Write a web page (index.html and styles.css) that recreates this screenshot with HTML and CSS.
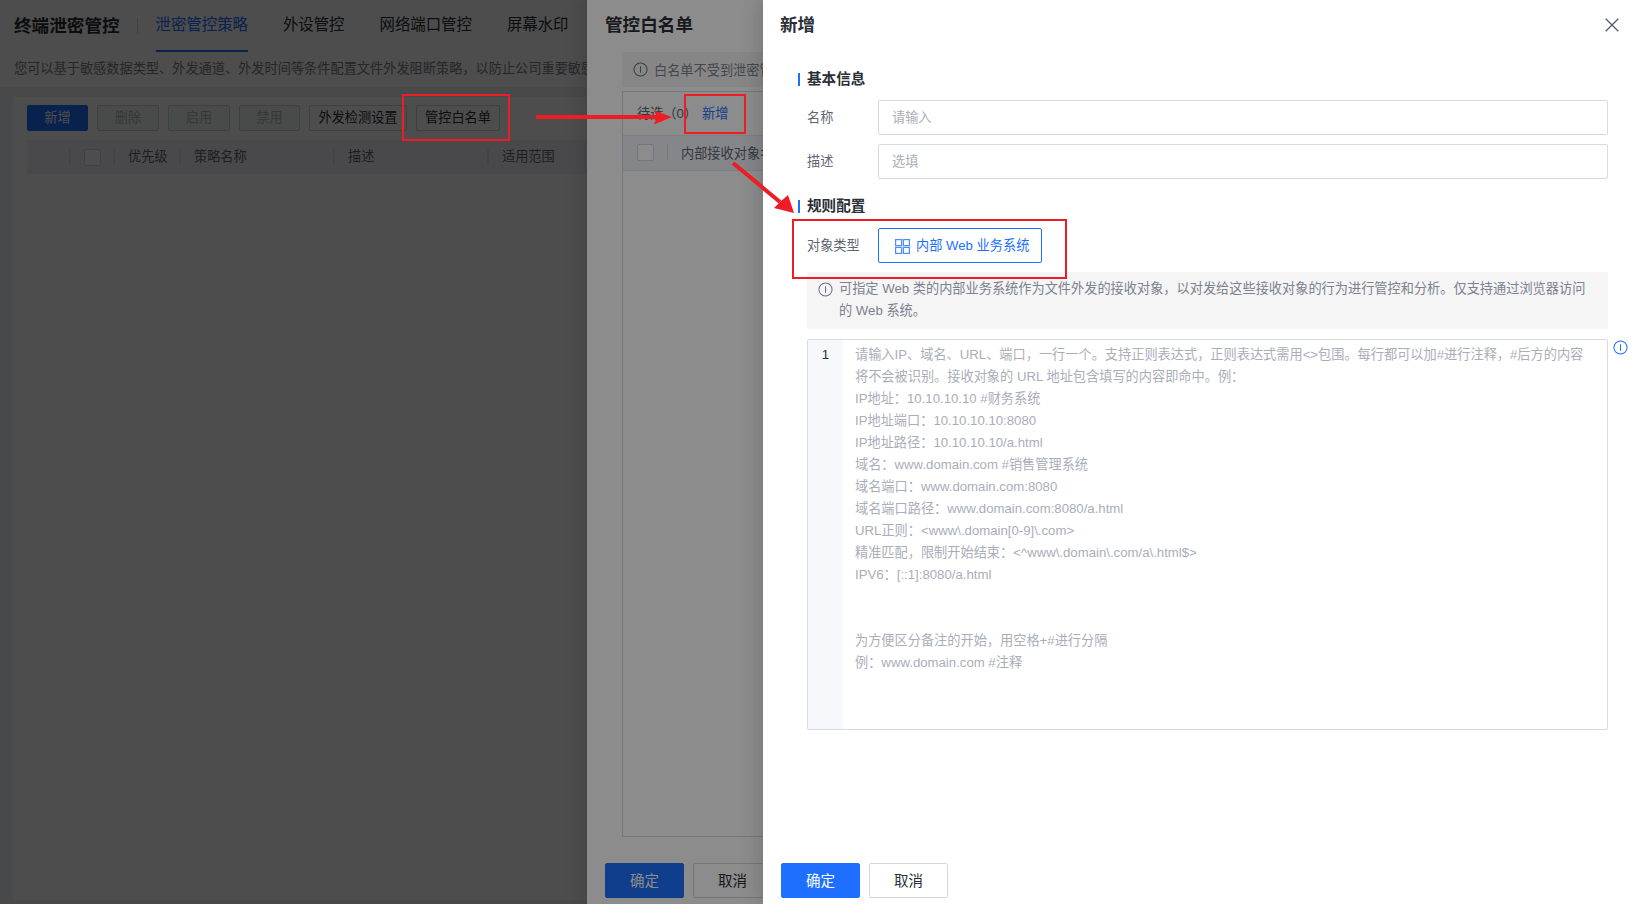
FILE: index.html
```html
<!DOCTYPE html>
<html lang="zh">

<head>
    <meta charset="utf-8">
    <title>终端泄密管控</title>
    <link rel="stylesheet" href="styles.css">
</head>

<body>
    <!-- 底层页面 -->
    <div class="page">
        <div class="page-head">
            <div class="page-title">终端泄密管控</div>
            <div class="head-sep"></div>
            <div class="tabs">
                <span class="tab active">泄密管控策略</span>
                <span class="tab">外设管控</span>
                <span class="tab">网络端口管控</span>
                <span class="tab">屏幕水印</span>
            </div>
        </div>
        <div class="page-desc">您可以基于敏感数据类型、外发通道、外发时间等条件配置文件外发阻断策略，以防止公司重要敏感</div>
        <div class="page-body">
            <div class="card">
                <div class="toolbar">
                    <span class="btn primary w61">新增</span>
                    <span class="btn disabled w62">删除</span>
                    <span class="btn disabled w62">启用</span>
                    <span class="btn disabled w61">禁用</span>
                    <span class="btn w98">外发检测设置</span>
                    <span class="btn w84">管控白名单</span>
                </div>
                <div class="table-head">
                    <span class="cell c-drag"></span>
                    <span class="cell c-check"><i class="checkbox"></i></span>
                    <span class="cell c-prio">优先级</span>
                    <span class="cell c-name">策略名称</span>
                    <span class="cell c-desc">描述</span>
                    <span class="cell c-range">适用范围</span>
                </div>
            </div>
        </div>
    </div>

    <div class="mask"></div>

    <!-- 管控白名单抽屉 -->
    <div class="drawer drawer-list">
        <div class="drawer-title">管控白名单</div>
        <div class="list-body">
            <div class="alert-short">
                <svg class="info-icon" viewBox="0 0 16 16"><circle cx="8" cy="8" r="7" /><path d="M8 4.5v7" /></svg>
                <span>白名单不受到泄密管控</span>
            </div>
            <div class="list-box">
                <div class="list-tabs">
                    <span>待选（0）</span>
                    <span class="link">新增</span>
                </div>
                <div class="list-head">
                    <i class="checkbox"></i>
                    <span class="list-sep"></span>
                    <span>内部接收对象名称</span>
                </div>
            </div>
        </div>
        <div class="drawer-foot">
            <span class="btn primary foot-btn">确定</span>
            <span class="btn foot-btn">取消</span>
        </div>
    </div>

    <div class="mask"></div>

    <!-- 新增抽屉 -->
    <div class="drawer drawer-add">
        <div class="drawer-title">新增</div>
        <svg class="close-icon" viewBox="0 0 14 14"><path d="M.7.7l12.6 12.6M13.3.7L.7 13.3" /></svg>
        <div class="form">
            <div class="section-title">基本信息</div>
            <div class="form-row">
                <label>名称</label>
                <div class="input">请输入</div>
            </div>
            <div class="form-row">
                <label>描述</label>
                <div class="input">选填</div>
            </div>
            <div class="section-title rule-title">规则配置</div>
            <div class="form-row">
                <label>对象类型</label>
                <div class="type-btn">
                    <svg class="grid-icon" viewBox="0 0 15 15">
                        <rect x=".6" y=".6" width="6" height="6" />
                        <rect x="8.400" y=".6" width="6" height="6" />
                        <rect x=".6" y="8.400" width="6" height="6" />
                        <rect x="8.400" y="8.400" width="6" height="6" />
                    </svg>
                    <span>内部 Web 业务系统</span>
                </div>
            </div>
            <div class="alert">
                <svg class="info-icon" viewBox="0 0 16 16"><circle cx="8" cy="8" r="7" /><path d="M8 4.5v7" /></svg>
                <div>可指定 Web 类的内部业务系统作为文件外发的接收对象，以对发给这些接收对象的行为进行管控和分析。仅支持通过浏览器访问<br>的 Web 系统。</div>
            </div>
            <div class="editor-wrap">
                <div class="editor">
                    <div class="gutter">1</div>
                    <div class="code">
                        <div>请输入IP、域名、URL、端口，一行一个。支持正则表达式，正则表达式需用&lt;&gt;包围。每行都可以加#进行注释，#后方的内容</div>
                        <div>将不会被识别。接收对象的 URL 地址包含填写的内容即命中。例：</div>
                        <div>IP地址：10.10.10.10 #财务系统</div>
                        <div>IP地址端口：10.10.10.10:8080</div>
                        <div>IP地址路径：10.10.10.10/a.html</div>
                        <div>域名：www.domain.com #销售管理系统</div>
                        <div>域名端口：www.domain.com:8080</div>
                        <div>域名端口路径：www.domain.com:8080/a.html</div>
                        <div>URL正则：&lt;www\.domain[0-9]\.com&gt;</div>
                        <div>精准匹配，限制开始结束：&lt;^www\.domain\.com/a\.html$&gt;</div>
                        <div>IPV6：[::1]:8080/a.html</div>
                        <div class="gap"></div>
                        <div>为方便区分备注的开始，用空格+#进行分隔</div>
                        <div>例：www.domain.com #注释</div>
                    </div>
                </div>
                <svg class="info-icon blue" viewBox="0 0 16 16"><circle cx="8" cy="8" r="7" /><path d="M8 4.5v7" /></svg>
            </div>
        </div>
        <div class="drawer-foot">
            <span class="btn primary foot-btn">确定</span>
            <span class="btn foot-btn">取消</span>
        </div>
    </div>

    <!-- 红色标注 -->
    <div class="mark mark-a"></div>
    <div class="mark mark-b"></div>
    <div class="mark mark-c"></div>
    <svg class="arrows" viewBox="0 0 1639 904">
        <path d="M536 117H660" />
        <path class="head" d="M672 117L654 110.500L657 117L654 124.500Z" />
        <path d="M733 163L780 202" />
        <path class="head" d="M794 213L774 208L780 202L788 195Z" />
    </svg>
</body>

</html>
```

FILE: styles.css
```css
body {
    margin: 0;
    width: 1639px;
    height: 904px;
    overflow: hidden;
    position: relative;
    font-family: "Liberation Sans", "Noto Sans CJK SC", sans-serif;
    font-size: 13.2px;
    color: #2b2f36;
    background: #fff;
}

/* 底层页面 */
.page {
    height: 904px;
    display: flex;
    flex-direction: column;
    background: #fff;
}

.page-head {
    display: flex;
    align-items: center;
    height: 52px;
    padding-left: 14px;
}

.page-title {
    font-size: 17.6px;
    font-weight: bold;
    padding-bottom: 4px;
}

.head-sep {
    width: 1px;
    height: 16px;
    background: #d5dae3;
    margin: 0 18px 0 17px;
}

.tabs {
    display: flex;
    gap: 35px;
    height: 52px;
}

.tab {
    font-size: 15.4px;
    line-height: 50px;
    height: 50px;
    white-space: nowrap;
}

.tab.active {
    color: #1e6fff;
    border-bottom: 2px solid #1e6fff;
}

.page-desc {
    height: 35px;
    line-height: 34px;
    padding-left: 14px;
    color: #7b818d;
    white-space: nowrap;
}

.page-body {
    flex: 1;
    background: #eff2f7;
    padding: 10px 0 0 13px;
}

.card {
    background: #fff;
    height: 787px;
    padding: 8px 14px;
}

.toolbar {
    display: flex;
    gap: 9px;
}

.btn {
    display: flex;
    align-items: center;
    justify-content: center;
    box-sizing: border-box;
    height: 26px;
    padding-bottom: 3px;
    border: 1px solid #d0d7e2;
    border-radius: 2px;
    background: #fff;
    white-space: nowrap;
}

.btn.primary {
    background: #1e6fff;
    border-color: #1e6fff;
    color: #fff;
}

.btn.disabled {
    background: #f5f6f8;
    color: #b4b9c3;
}

.w61 {
    width: 61px;
}

.w62 {
    width: 62px;
}

.w84 {
    width: 84px;
}

.w98 {
    width: 98px;
}

.table-head {
    display: flex;
    align-items: center;
    height: 34px;
    margin-top: 9px;
    background: #f3f5f9;
    color: #5f6672;
}

.cell {
    display: flex;
    align-items: center;
    box-sizing: border-box;
    height: 16px;
    border-right: 2px solid #dfe3ea;
    flex: none;
    white-space: nowrap;
    line-height: 12px;
}

.c-drag {
    width: 44px;
}

.c-check {
    width: 44px;
    padding-left: 13px;
}

.c-prio {
    width: 66px;
    padding-left: 13px;
}

.c-name {
    width: 154px;
    padding-left: 13px;
}

.c-desc {
    width: 154px;
    padding-left: 13px;
}

.c-range {
    padding-left: 13px;
    border-right: 0;
}

.checkbox {
    display: block;
    box-sizing: border-box;
    width: 17px;
    height: 17px;
    border: 1px solid #d0d7e2;
    border-radius: 2px;
    background: #fff;
    flex: none;
}

.mask {
    position: absolute;
    inset: 0;
    background: rgba(0, 0, 0, 0.45);
}

/* 抽屉 */
.drawer {
    position: absolute;
    top: 0;
    bottom: 0;
    right: 0;
    background: #fff;
    display: flex;
    flex-direction: column;
    box-sizing: border-box;
    box-shadow: -6px 0 16px rgba(0, 0, 0, 0.12);
    overflow: hidden;
}

.drawer-list {
    left: 587px;
    padding-left: 18px;
}

.drawer-add {
    left: 763px;
    padding-left: 17px;
}

.drawer-add .drawer-foot {
    padding-left: 1px;
}

.drawer-title {
    font-size: 17.6px;
    font-weight: bold;
    line-height: 50px;
    height: 50px;
    flex: none;
}

.drawer-foot {
    display: flex;
    gap: 9px;
    height: 41px;
    flex: none;
}

.foot-btn {
    width: 79px;
    height: 35px;
    padding-bottom: 2px;
    font-size: 14.5px;
}

.list-body {
    flex: 1;
    padding: 2px 18px 26px 17px;
    display: flex;
    flex-direction: column;
}

.alert-short {
    display: flex;
    align-items: center;
    gap: 6px;
    height: 35px;
    padding-left: 11px;
    background: #f5f5f6;
    color: #7b818d;
    white-space: nowrap;
}

.info-icon {
    width: 15px;
    height: 15px;
    flex: none;
    fill: none;
    stroke: #6b717c;
    stroke-width: 1.100;
}

.info-icon.blue {
    stroke: #1e6fff;
}

.list-box {
    flex: 1;
    margin-top: 4px;
    border: 1px solid #d5dae3;
}

.list-tabs {
    display: flex;
    gap: 5px;
    height: 43px;
    align-items: center;
    padding: 0 0 2px 14px;
    box-sizing: border-box;
    white-space: nowrap;
    color: #5f6672;
}

.link {
    color: #1e6fff;
}

.list-head {
    display: flex;
    align-items: center;
    height: 36px;
    padding: 0 0 2px 14px;
    box-sizing: border-box;
    background: #f3f5f9;
    border-top: 1px solid #e2e5eb;
    border-bottom: 1px solid #e2e5eb;
    color: #5f6672;
    white-space: nowrap;
}

.list-sep {
    width: 1px;
    height: 16px;
    margin: 0 13px 0 13px;
    background: #d5dae3;
}

.close-icon {
    position: absolute;
    top: 18px;
    right: 20px;
    width: 14px;
    height: 14px;
    fill: none;
    stroke: #545a66;
    stroke-width: 1.300;
}

.form {
    flex: 1;
    padding: 20px 31px 0 27px;
    width: 801px;
    box-sizing: content-box;
}

.section-title {
    position: relative;
    font-size: 14.6px;
    font-weight: bold;
    line-height: 18px;
    height: 18px;
    margin-bottom: 12px;
}

.section-title::before {
    content: "";
    position: absolute;
    left: -9px;
    top: 3px;
    width: 2px;
    height: 13px;
    background: #1e6fff;
}

.rule-title {
    margin-top: 18px;
    margin-bottom: 13px;
}

.form-row {
    display: flex;
    align-items: center;
    margin-bottom: 9px;
}

.form-row label {
    width: 71px;
    flex: none;
    color: #5f6672;
    padding-bottom: 2px;
}

.input {
    flex: 1;
    box-sizing: border-box;
    height: 35px;
    line-height: 33px;
    padding-left: 13px;
    border: 1px solid #d5dae3;
    border-radius: 2px;
    color: #a9aeb9;
}

.type-btn {
    display: flex;
    align-items: center;
    gap: 6px;
    box-sizing: border-box;
    width: 164px;
    height: 35px;
    padding-left: 16px;
    border: 1px solid #1e6fff;
    border-radius: 2px;
    color: #1e6fff;
    white-space: nowrap;
}

.type-btn span {
    padding-bottom: 3px;
}

.grid-icon {
    width: 15px;
    height: 15px;
    flex: none;
    margin-top: 1px;
    fill: none;
    stroke: #4a8bff;
    stroke-width: 1.200;
}

.alert {
    display: flex;
    gap: 6px;
    box-sizing: border-box;
    height: 57px;
    padding: 6px 11px;
    margin-top: 1px;
    background: #f5f5f6;
    color: #7b818d;
    line-height: 22px;
    white-space: nowrap;
}

.alert .info-icon {
    margin-top: 4px;
}

.editor-wrap {
    position: relative;
    margin-top: 10px;
}

.editor {
    display: flex;
    box-sizing: border-box;
    height: 391px;
    border: 1px solid #d5dae3;
    border-radius: 2px;
}

.gutter {
    width: 35px;
    flex: none;
    padding-top: 4px;
    line-height: 22px;
    text-align: center;
    background: #f7f8fc;
    color: #2b2f36;
}

.code {
    padding: 4px 0 0 12px;
    line-height: 22px;
    color: #a9aeb9;
    white-space: nowrap;
}

.gap {
    height: 44px;
}

.editor-wrap .info-icon.blue {
    position: absolute;
    right: -20px;
    top: 1px;
}

/* 标注 */
.mark {
    position: absolute;
    box-sizing: border-box;
    border: 2px solid #ee1c25;
}

.mark-a {
    left: 402px;
    top: 94px;
    width: 108px;
    height: 47px;
}

.mark-b {
    left: 684px;
    top: 94px;
    width: 62px;
    height: 40px;
}

.mark-c {
    left: 792px;
    top: 219px;
    width: 275px;
    height: 60px;
}

.arrows {
    position: absolute;
    left: 0;
    top: 0;
    width: 1639px;
    height: 904px;
    fill: none;
    stroke: #ee1c25;
    stroke-width: 4;
}

.arrows .head {
    fill: #ee1c25;
    stroke: none;
}
```
